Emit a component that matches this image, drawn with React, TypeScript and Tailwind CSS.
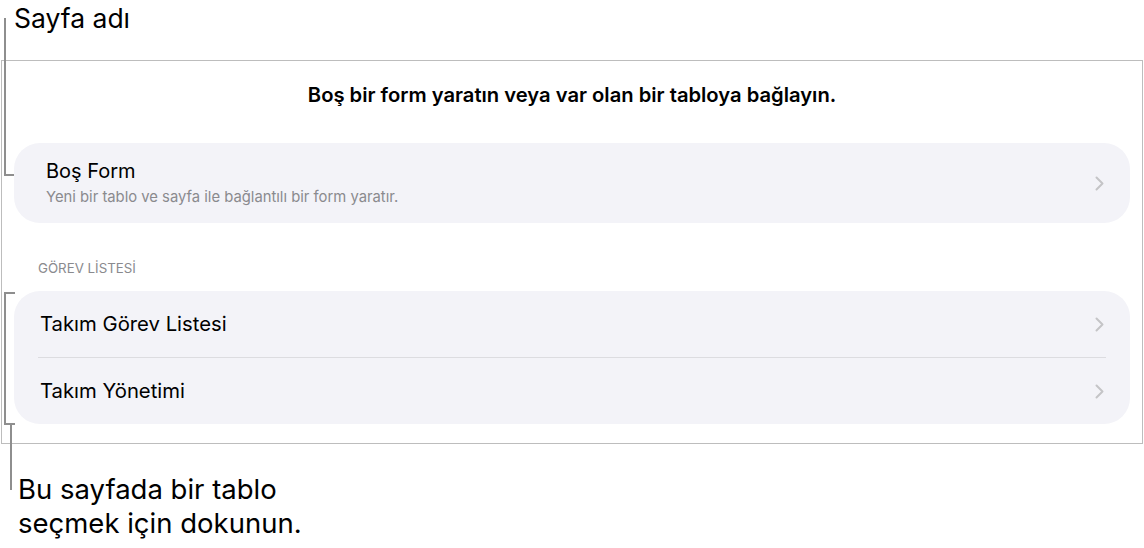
const FONT = { fontFamily: 'Inter, "Noto Sans", sans-serif' };

// gray callout brackets drawn on top of the page
function Callouts() {
  return (
    <svg className="pointer-events-none absolute inset-0" width={1144} height={548} fill="none">
      <g stroke="#8e8e8e" strokeWidth={2}>
        <path d="M5 18 V175 H14" />
        <path d="M15 293 H5 V424 H15" />
        <path d="M11 424 V490" />
      </g>
    </svg>
  );
}

function Chevron() {
  return (
    <svg width={9} height={15} viewBox="0 0 9 15" fill="none" className="shrink-0">
      <path d="M1.5 1.5 L7.5 7.5 L1.5 13.5" stroke="#c4c4c7" strokeWidth={2} strokeLinecap="round" strokeLinejoin="round" />
    </svg>
  );
}

function Row({ label }: { label: string }) {
  return (
    <div className="flex h-[66px] items-center justify-between pl-[26px] pr-[26px]">
      <span className="text-[20.3px] leading-[24px] text-black">{label}</span>
      <Chevron />
    </div>
  );
}

export default function App() {
  return (
    <div className="relative h-[548px] w-[1144px] overflow-hidden bg-white" style={FONT}>
      <div className="h-[60px] pl-[14px] pt-px text-[26.5px] leading-[34px] text-black">Sayfa adı</div>

      <div className="ml-px w-[1142px] border border-[#bdbdbd] px-3 pb-[19px]">
        <h1 className="pt-[22px] text-center text-[20.2px] font-semibold leading-[24px] text-black">
          Boş bir form yaratın veya var olan bir tabloya bağlayın.
        </h1>

        <div className="mt-9 flex h-[80px] items-center justify-between rounded-[26px] bg-[#f3f3f8] pl-[32px] pr-[26px]">
          <div className="flex flex-col gap-[4px]">
            <span className="text-[20px] leading-[24px] text-black">Boş Form</span>
            <span className="text-[14.8px] leading-[20px] text-[#8a8a8e]">
              Yeni bir tablo ve sayfa ile bağlantılı bir form yaratır.
            </span>
          </div>
          <Chevron />
        </div>

        <div className="mt-9 pl-6 text-[13.3px] leading-[18px] text-[#8a8a8e]">GÖREV LİSTESİ</div>

        <div className="mt-[14px] rounded-[26px] bg-[#f3f3f8]">
          <Row label="Takım Görev Listesi" />
          <div className="mx-6 h-px bg-[#dcdce0]" />
          <Row label="Takım Yönetimi" />
        </div>
      </div>

      <div className="mt-[28px] pl-[18px] text-[27.5px] leading-[34px] text-black">
        Bu sayfada bir tablo
        <br />
        seçmek için dokunun.
      </div>

      <Callouts />
    </div>
  );
}
